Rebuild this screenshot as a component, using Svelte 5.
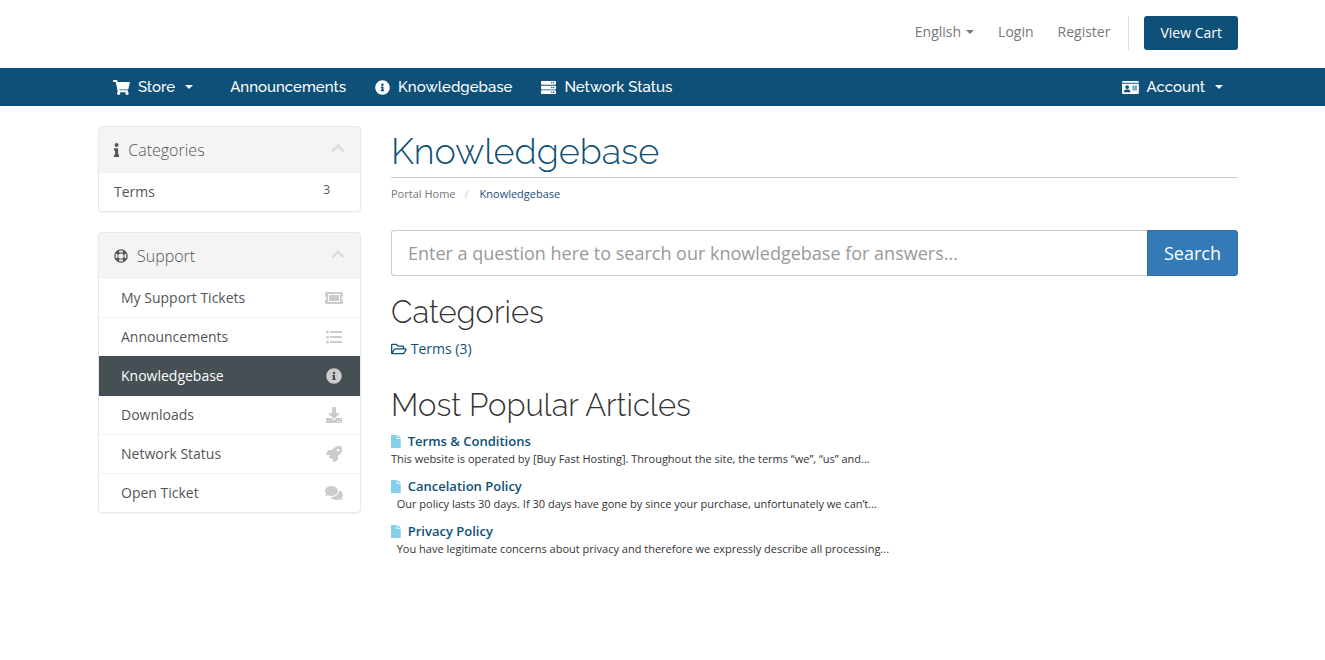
<script lang="ts">
	type Icon = { box: string; d: string };

	const icons: Record<string, Icon> = {
		cart: {
			box: '0 0 576 512',
			d: 'M528.12 301.319l47.273-208C578.806 78.301 567.391 64 551.99 64H159.208l-9.166-44.81C147.758 8.021 137.93 0 126.529 0H24C10.745 0 0 10.745 0 24v16c0 13.255 10.745 24 24 24h69.883l70.248 343.435C147.325 417.1 136 435.222 136 456c0 30.928 25.072 56 56 56s56-25.072 56-56c0-15.674-6.447-29.835-16.824-40h209.647C430.447 426.165 424 440.326 424 456c0 30.928 25.072 56 56 56s56-25.072 56-56c0-22.172-12.888-41.332-31.579-50.405l5.517-24.276c3.413-15.018-8.002-29.319-23.403-29.319H218.117l-6.545-32h293.145c11.206 0 20.92-7.754 23.403-18.681z'
		},
		infoCircle: {
			box: '0 0 512 512',
			d: 'M256 8C119.043 8 8 119.083 8 256c0 136.997 111.043 248 248 248s248-111.003 248-248C504 119.083 392.957 8 256 8zm0 110c23.196 0 42 18.804 42 42s-18.804 42-42 42-42-18.804-42-42 18.804-42 42-42zm56 254c0 6.627-5.373 12-12 12h-88c-6.627 0-12-5.373-12-12v-24c0-6.627 5.373-12 12-12h12v-64h-12c-6.627 0-12-5.373-12-12v-24c0-6.627 5.373-12 12-12h64c6.627 0 12 5.373 12 12v100h12c6.627 0 12 5.373 12 12v24z'
		},
		server: {
			box: '0 0 512 512',
			d: 'M32 32h448a32 32 0 0 1 32 32v64a32 32 0 0 1-32 32H32a32 32 0 0 1-32-32V64a32 32 0 0 1 32-32zM344 96a24 24 0 1 0 48 0 24 24 0 1 0-48 0zm64 0a24 24 0 1 0 48 0 24 24 0 1 0-48 0zM32 192h448a32 32 0 0 1 32 32v64a32 32 0 0 1-32 32H32a32 32 0 0 1-32-32v-64a32 32 0 0 1 32-32zM344 256a24 24 0 1 0 48 0 24 24 0 1 0-48 0zm64 0a24 24 0 1 0 48 0 24 24 0 1 0-48 0zM32 352h448a32 32 0 0 1 32 32v64a32 32 0 0 1-32 32H32a32 32 0 0 1-32-32v-64a32 32 0 0 1 32-32zM344 416a24 24 0 1 0 48 0 24 24 0 1 0-48 0zm64 0a24 24 0 1 0 48 0 24 24 0 1 0-48 0z'
		},
		card: {
			box: '0 0 576 512',
			d: 'M48 32h480a48 48 0 0 1 48 48v16H0V80a48 48 0 0 1 48-48zM0 128h576v304a48 48 0 0 1-48 48H48a48 48 0 0 1-48-48zM112 240a64 64 0 1 0 128 0 64 64 0 1 0-128 0zM64 397c0 11 10 19 22 19h180c12 0 22-8 22-19 0-42-30-77-67-77-12 0-20 8-45 8s-33-8-45-8c-37 0-67 35-67 77zM352 200v16c0 4 4 8 8 8h144c4 0 8-4 8-8v-16c0-4-4-8-8-8H360c-4 0-8 4-8 8zM352 264v16c0 4 4 8 8 8h144c4 0 8-4 8-8v-16c0-4-4-8-8-8H360c-4 0-8 4-8 8zM352 328v16c0 4 4 8 8 8h144c4 0 8-4 8-8v-16c0-4-4-8-8-8H360c-4 0-8 4-8 8z'
		},
		info: {
			box: '0 0 192 512',
			d: 'M20 424.229h20V279.771H20c-11.046 0-20-8.954-20-20V212c0-11.046 8.954-20 20-20h112c11.046 0 20 8.954 20 20v212.229h20c11.046 0 20 8.954 20 20V492c0 11.046-8.954 20-20 20H20c-11.046 0-20-8.954-20-20v-47.771c0-11.046 8.954-20 20-20zM96 0C56.235 0 24 32.235 24 72s32.235 72 72 72 72-32.235 72-72S135.764 0 96 0z'
		},
		lifeRing: {
			box: '0 0 512 512',
			d: 'M8 256a248 248 0 1 0 496 0 248 248 0 1 0-496 0zM177 76a196 196 0 0 1 158 0l-28 58a128 128 0 0 0-102 0zM177 436a196 196 0 0 0 158 0l-28-58a128 128 0 0 1-102 0zM76 177a196 196 0 0 0 0 158l58-28a128 128 0 0 1 0-102zM436 177a196 196 0 0 1 0 158l-58-28a128 128 0 0 0 0-102zM160 256a96 96 0 1 0 192 0 96 96 0 1 0-192 0z'
		},
		ticket: {
			box: '0 0 576 512',
			d: 'M128 160h320v192H128V160zm400 96c0 26.51 21.49 48 48 48v96c0 26.51-21.49 48-48 48H48c-26.51 0-48-21.49-48-48v-96c26.51 0 48-21.49 48-48s-21.49-48-48-48v-96c0-26.51 21.49-48 48-48h480c26.51 0 48 21.49 48 48v96c-26.51 0-48 21.49-48 48zm-48-104c0-13.255-10.745-24-24-24H120c-13.255 0-24 10.745-24 24v208c0 13.255 10.745 24 24 24h336c13.255 0 24-10.745 24-24V152z'
		},
		list: {
			box: '0 0 512 512',
			d: 'M0 96a48 48 0 1 0 96 0 48 48 0 1 0-96 0zM0 256a48 48 0 1 0 96 0 48 48 0 1 0-96 0zM0 416a48 48 0 1 0 96 0 48 48 0 1 0-96 0zM144 64h352a16 16 0 0 1 16 16v32a16 16 0 0 1-16 16H144a16 16 0 0 1-16-16V80a16 16 0 0 1 16-16zM144 224h352a16 16 0 0 1 16 16v32a16 16 0 0 1-16 16H144a16 16 0 0 1-16-16v-32a16 16 0 0 1 16-16zM144 384h352a16 16 0 0 1 16 16v32a16 16 0 0 1-16 16H144a16 16 0 0 1-16-16v-32a16 16 0 0 1 16-16z'
		},
		download: {
			box: '0 0 512 512',
			d: 'M216 0h80c13.3 0 24 10.7 24 24v168h87.7c17.8 0 26.7 21.5 14.1 34.1L269.7 378.3c-7.5 7.5-19.8 7.5-27.3 0L90.1 226.1c-12.6-12.6-3.7-34.1 14.1-34.1H192V24c0-13.3 10.7-24 24-24zm296 376v112c0 13.3-10.7 24-24 24H24c-13.3 0-24-10.7-24-24V376c0-13.3 10.7-24 24-24h146.7l49 49c20.1 20.1 52.5 20.1 72.6 0l49-49H488c13.3 0 24 10.7 24 24zm-124 88c0-11-9-20-20-20s-20 9-20 20 9 20 20 20 20-9 20-20zm64 0c0-11-9-20-20-20s-20 9-20 20 9 20 20 20 20-9 20-20z'
		},
		rocket: {
			box: '0 0 512 512',
			d: 'M505.12 19.094c-1.189-5.531-6.658-11-12.207-12.187C460.716 0 435.507 0 410.407 0 307.175 0 245.269 55.203 199.052 128H94.838c-16.348.016-35.557 11.875-42.887 26.484L2.516 253.297A28.4 28.4 0 0 0 0 264a24.008 24.008 0 0 0 24.006 24h103.852l-22.475 22.469c-11.369 11.365-12.953 32.256 0 45.25l50.904 50.906c11.156 11.188 32.22 13.156 45.277 0L224 384.141V488a24.008 24.008 0 0 0 24 24 28.552 28.552 0 0 0 10.688-2.516l98.73-49.39c14.629-7.297 26.508-26.5 26.508-42.86V312.797c72.594-46.313 128.03-108.407 128.03-211.094.08-25.203.08-50.41-6.83-82.61zM384.04 168a40 40 0 1 1 0-80 40 40 0 0 1 0 80z'
		},
		comments: {
			box: '0 0 576 512',
			d: 'M416 192c0-88.4-93.1-160-208-160S0 103.6 0 192c0 34.3 14.1 65.9 38 92-13.4 30.2-35.5 54.2-35.8 54.5-2.2 2.3-2.8 5.7-1.5 8.7S4.8 352 8 352c36.6 0 66.9-12.3 88.7-25 32.2 15.7 70.3 25 111.3 25 114.9 0 208-71.6 208-160zm122 220c23.9-26 38-57.7 38-92 0-66.9-53.5-124.2-129.3-148.1.9 6.6 1.3 13.3 1.3 20.1 0 105.9-107.7 192-240 192-10.8 0-21.3-.8-31.7-1.9C207.8 439.6 281.8 480 368 480c41 0 79.1-9.2 111.3-25 21.8 12.7 52.1 25 88.7 25 3.2 0 6.1-1.9 7.3-4.8 1.3-2.9.7-6.3-1.5-8.7-.3-.3-22.4-24.2-35.8-54.5z'
		},
		folder: {
			box: '0 0 576 512',
			d: 'M527.9 224H480v-48c0-26.5-21.5-48-48-48H272l-64-64H48C21.5 64 0 85.5 0 112v288c0 26.5 21.5 48 48 48h400c16.5 0 31.9-8.5 40.7-22.6l79.9-128c20-31.9-3-73.4-40.7-73.4zM48 118c0-3.3 2.7-6 6-6h134.1l64 64H426c3.3 0 6 2.7 6 6v42H152c-16.8 0-32.4 8.8-41.1 23.2L48 351.4zm400 282H72l77.2-128H528z'
		},
		file: {
			box: '0 0 384 512',
			d: 'M224 136V0H24C10.7 0 0 10.7 0 24v464c0 13.3 10.7 24 24 24h336c13.3 0 24-10.7 24-24V160H248c-13.2 0-24-10.8-24-24zm160-14.1v6.1H256V0h6.1c6.4 0 12.5 2.5 17 7l97.9 98c4.5 4.5 7 10.6 7 16.9z'
		},
		chevronUp: {
			box: '0 0 512 512',
			d: 'M256 100L16 340l70 70 170-170 170 170 70-70z'
		}
	};

	const supportLinks = [
		{ label: 'My Support Tickets', icon: 'ticket' },
		{ label: 'Announcements', icon: 'list' },
		{ label: 'Knowledgebase', icon: 'infoCircle', active: true },
		{ label: 'Downloads', icon: 'download' },
		{ label: 'Network Status', icon: 'rocket' },
		{ label: 'Open Ticket', icon: 'comments' }
	];

	const articles = [
		{
			title: 'Terms & Conditions',
			excerpt: 'This website is operated by [Buy Fast Hosting]. Throughout the site, the terms “we”, “us” and...'
		},
		{
			title: 'Cancelation Policy',
			excerpt:
				'\u00a0 Our policy lasts 30 days. If 30 days have gone by since your purchase, unfortunately we can’t...'
		},
		{
			title: 'Privacy Policy',
			excerpt:
				'\u00a0 You have legitimate concerns about privacy and therefore we expressly describe all processing...'
		}
	];

	let query = $state('');
	let categoriesOpen = $state(true);
	let supportOpen = $state(true);
</script>

{#snippet icon(name: string)}
	<svg class="icon" viewBox={icons[name].box} aria-hidden="true">
		<path d={icons[name].d} fill-rule="evenodd" />
	</svg>
{/snippet}

<header class="shell top">
	<button class="top-link" type="button" aria-haspopup="true">English <span class="caret"></span></button>
	<a class="top-link" href="#login">Login</a>
	<a class="top-link" href="#register">Register</a>
	<div class="cart-wrapper">
		<a class="view-cart" href="#cart">View Cart</a>
	</div>
</header>

<nav class="shell menu">
	<button class="menu-item" type="button" aria-haspopup="true">
		{@render icon('cart')} Store <span class="caret"></span>
	</button>
	<a class="menu-item" href="#announcements">Announcements</a>
	<a class="menu-item" href="#knowledgebase">{@render icon('infoCircle')} Knowledgebase</a>
	<a class="menu-item" href="#status">{@render icon('server')} Network Status</a>
	<button class="menu-item account" type="button" aria-haspopup="true">
		{@render icon('card')} Account <span class="caret"></span>
	</button>
</nav>

<div class="shell body">
	<aside>
		<section class="panel">
			<h3>
				{@render icon('info')} Categories
				<button
					class="toggle"
					type="button"
					aria-label="Toggle categories"
					onclick={() => (categoriesOpen = !categoriesOpen)}>{@render icon('chevronUp')}</button
				>
			</h3>
			{#if categoriesOpen}
				<a class="row category" href="#terms">Terms <span class="count">3</span></a>
			{/if}
		</section>

		<section class="panel">
			<h3>
				{@render icon('lifeRing')} Support
				<button
					class="toggle"
					type="button"
					aria-label="Toggle support"
					onclick={() => (supportOpen = !supportOpen)}>{@render icon('chevronUp')}</button
				>
			</h3>
			{#if supportOpen}
				{#each supportLinks as link (link.label)}
					<a class="row" class:active={link.active} href="#support">
						{link.label}
						<span class="row-icon">{@render icon(link.icon)}</span>
					</a>
				{/each}
			{/if}
		</section>
	</aside>

	<main>
		<h1>Knowledgebase</h1>
		<ol class="breadcrumb">
			<li><a href="#home">Portal Home</a></li>
			<li class="current">Knowledgebase</li>
		</ol>

		<form class="search" onsubmit={(e) => e.preventDefault()}>
			<input
				type="text"
				aria-label="Search the knowledgebase"
				placeholder="Enter a question here to search our knowledgebase for answers..."
				bind:value={query}
			/>
			<button type="submit">Search</button>
		</form>

		<h2>Categories</h2>
		<a class="folder" href="#terms">{@render icon('folder')} Terms (3)</a>

		<h2 class="popular">Most Popular Articles</h2>
		{#each articles as article (article.title)}
			<article>
				<a href="#article">{@render icon('file')} {article.title}</a>
				<p>{article.excerpt}</p>
			</article>
		{/each}
	</main>
</div>

<style>
	:global(body) {
		background: #fff;
		color: #333;
		font: 14px/20px 'Open Sans', sans-serif;
	}

	a {
		color: #0e5077;
		text-decoration: none;
	}

	button {
		padding: 0;
		border: 0;
		background: none;
		font: inherit;
		cursor: pointer;
	}

	.icon {
		height: 1em;
		fill: currentColor;
		flex: none;
	}

	.caret {
		border: 4px solid transparent;
		border-top-color: currentColor;
		border-bottom: 0;
	}

	.shell {
		display: flex;
		padding: 0 87px 0 98px;
	}

	.top {
		height: 68px;
		align-items: center;
		justify-content: flex-end;
		gap: 24px;
	}

	.top-link {
		display: flex;
		align-items: center;
		gap: 5px;
		padding-bottom: 4px;
		color: #777;
	}

	.cart-wrapper {
		margin: 0 0 2px -6px;
		padding-left: 15px;
		border-left: 1px solid #ddd;
	}

	.view-cart {
		display: block;
		padding: 7px 16px;
		border-radius: 3px;
		background: #0e5077;
		color: #fff;
	}

	.menu {
		height: 38px;
		align-items: center;
		gap: 29px;
		background: #0e5077;
	}

	.menu-item {
		display: flex;
		align-items: center;
		gap: 8px;
		color: #fff;
		font-family: Raleway, Lato, sans-serif;
		font-size: 15px;
		font-weight: 500;
	}

	.menu-item:first-child {
		padding: 0 8px 0 15px;
	}

	.menu-item .caret {
		margin-left: 2px;
	}

	.account {
		margin-left: auto;
		padding-right: 15px;
	}

	.body {
		gap: 30px;
		padding-top: 20px;
		align-items: flex-start;
	}

	aside {
		flex: 0 0 263px;
		display: flex;
		flex-direction: column;
		gap: 20px;
	}

	.panel {
		border: 1px solid #e8e8e8;
		border-radius: 4px;
		box-shadow: 0 1px 1px rgba(0, 0, 0, 0.05);
		overflow: hidden;
	}

	h3 {
		display: flex;
		align-items: center;
		gap: 9px;
		height: 46px;
		margin: 0;
		padding: 0 15px;
		background: #f4f4f4;
		color: #555;
		font-size: 16px;
		font-weight: 300;
	}

	h3 > .icon {
		height: 14px;
	}

	.toggle {
		display: flex;
		margin-left: auto;
		padding-bottom: 4px;
		color: #ddd;
		font-size: 14px;
	}

	.row {
		display: flex;
		align-items: center;
		justify-content: space-between;
		height: 38px;
		padding: 0 16px 0 22px;
		border-bottom: 1px solid #f0f0f0;
		color: #555;
	}

	.row:last-child {
		border-bottom: 0;
	}

	.category {
		padding: 0 30px 0 15px;
	}

	.count {
		padding-bottom: 4px;
		font-size: 12px;
	}

	.row-icon {
		display: flex;
		justify-content: center;
		width: 20px;
		color: #ccc;
		font-size: 16px;
	}

	.active {
		margin-top: -1px;
		border: solid #454f54;
		border-width: 1px 0;
		background: #454f54;
		color: #fff;
	}

	main {
		flex: 1;
		min-width: 0;
	}

	h1,
	h2 {
		margin: 0;
		font-family: Raleway, Lato, sans-serif;
		font-weight: 300;
	}

	h1 {
		padding: 5px 0 6px;
		border-bottom: 1px solid #ccc;
		color: #0e5077;
		font-size: 36px;
		line-height: 40px;
	}

	.breadcrumb {
		display: flex;
		margin: 0 0 28px;
		padding: 8px 0 0;
		font-size: 11px;
		line-height: 16px;
		list-style: none;
	}

	.breadcrumb a {
		color: #777;
	}

	.current {
		color: #1a4d80;
	}

	.current::before {
		content: '/';
		padding: 0 11px 0 9px;
		color: #ccc;
	}

	.search {
		display: flex;
		height: 46px;
		font-size: 18px;
	}

	.search input {
		flex: 1;
		min-width: 0;
		box-sizing: border-box;
		padding: 0 16px;
		border: 1px solid #ccc;
		border-right: 0;
		border-radius: 3px 0 0 3px;
		font: inherit;
	}

	.search input::placeholder {
		color: #999;
	}

	.search button {
		padding: 0 16px;
		border: 1px solid #2e6da4;
		border-radius: 0 3px 3px 0;
		background: #337ab7;
		color: #fff;
	}

	h2 {
		margin: 20px 0 10px;
		font-size: 31px;
		line-height: 33px;
	}

	.folder {
		display: flex;
		align-items: center;
		gap: 4px;
	}

	.popular {
		margin-top: 30px;
	}

	article {
		margin-bottom: 10px;
	}

	article a {
		display: flex;
		align-items: center;
		gap: 7px;
		height: 18px;
		font-size: 13px;
		font-weight: 600;
	}

	article .icon {
		color: #87ceeb;
	}

	article p {
		margin: 0;
		font-size: 11px;
		line-height: 17px;
	}
</style>
